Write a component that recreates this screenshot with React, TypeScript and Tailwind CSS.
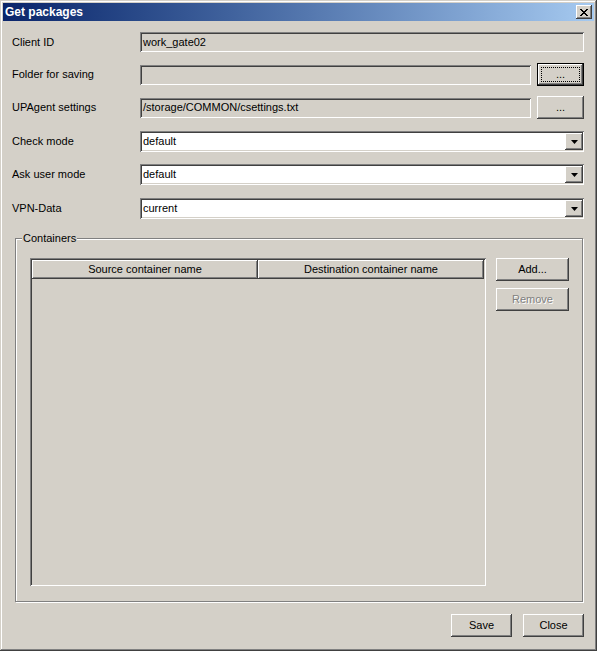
const FONT = "font-['Liberation_Sans',Arial,sans-serif]"

const raised =
  'bg-[#d4d0c8] shadow-[inset_-1px_-1px_0_#404040,inset_1px_1px_0_#fff,inset_-2px_-2px_0_#808080]'
const sunken =
  'shadow-[inset_1px_1px_0_#808080,inset_-1px_-1px_0_#fff,inset_2px_2px_0_#404040,inset_-2px_-2px_0_#d4d0c8]'

function Field({ value, white, className = '' }: { value?: string; white?: boolean; className?: string }) {
  return (
    <div
      className={`h-[20px] flex items-center pl-[3px] text-[11px] text-black ${white ? 'bg-white' : 'bg-[#d4d0c8]'} ${sunken} ${className}`}
    >
      {value}
    </div>
  )
}

function Combo({ value }: { value: string }) {
  return (
    <div className={`relative flex-1 h-[21px] bg-white flex items-center pl-[3px] text-[11px] text-black ${sunken}`}>
      <span className="flex-1">{value}</span>
      <div className={`w-[18px] h-[17px] mr-[1px] flex items-center justify-center ${raised}`}>
        <svg width="7" height="4" viewBox="0 0 7 4">
          <path d="M0 0h7L3.5 4z" fill="#000" />
        </svg>
      </div>
    </div>
  )
}

function Button({
  children,
  className = '',
  focused,
  disabled,
}: {
  children: React.ReactNode
  className?: string
  focused?: boolean
  disabled?: boolean
}) {
  if (focused) {
    return (
      <div className={`border border-black ${className}`}>
        <div className={`w-full h-full p-[3px] ${raised}`}>
          <div className="w-full h-full border border-dotted border-black flex items-center justify-center text-[11px] text-black">
            {children}
          </div>
        </div>
      </div>
    )
  }
  return (
    <div
      className={`flex items-center justify-center text-[11px] ${raised} ${
        disabled ? 'text-[#808080] [text-shadow:1px_1px_0_#fff]' : 'text-black'
      } ${className}`}
    >
      {children}
    </div>
  )
}

function Row({ label, children, className = '' }: { label: string; children: React.ReactNode; className?: string }) {
  return (
    <div className={`flex items-center ${className}`}>
      <div className="w-[128px] text-[11px] text-black">{label}</div>
      {children}
    </div>
  )
}

export default function App() {
  return (
    <div
      className={`${FONT} w-[597px] h-[651px] p-[3px] flex flex-col bg-[#d4d0c8] shadow-[inset_-1px_-1px_0_#404040,inset_1px_1px_0_#d4d0c8,inset_-2px_-2px_0_#808080,inset_2px_2px_0_#fff]`}
    >
      {/* Title bar */}
      <div className="h-[18px] flex items-center pl-[2px] pr-[2px] bg-gradient-to-r from-[#0a246a] to-[#a6caf0]">
        <span className="flex-1 text-white font-bold text-[12px] leading-none">Get packages</span>
        <div className={`w-[16px] h-[14px] flex items-center justify-center ${raised}`}>
          <svg width="8" height="7" viewBox="0 0 8 7" shapeRendering="crispEdges">
            <path
              d="M0 0h2v1h1v1h2V1h1V0h2v1H7v1H6v1H5v1h1v1h1v1h1v1H6V6H5V5H3v1H2v1H0V6h1V5h1V4h1V3H2V2H1V1H0z"
              fill="#000"
            />
          </svg>
        </div>
      </div>

      {/* Form */}
      <div className="flex flex-col pl-[9px] pr-[10px]">
        <Row label="Client ID" className="mt-[11px] h-[20px]">
          <Field value="work_gate02" className="flex-1" />
        </Row>
        <Row label="Folder for saving" className="mt-[11px] h-[23px]">
          <Field className="flex-1" />
          <Button focused className="ml-[6px] w-[47px] h-[23px]">
            ...
          </Button>
        </Row>
        <Row label="UPAgent settings" className="mt-[10px] h-[23px]">
          <Field value="/storage/COMMON/csettings.txt" className="flex-1" />
          <Button className="ml-[6px] w-[47px] h-[23px]">...</Button>
        </Row>
        <Row label="Check mode" className="mt-[12px] h-[21px]">
          <Combo value="default" />
        </Row>
        <Row label="Ask user mode" className="mt-[12px] h-[21px]">
          <Combo value="default" />
        </Row>
        <Row label="VPN-Data" className="mt-[13px] h-[21px]">
          <Combo value="current" />
        </Row>
      </div>

      {/* Containers group */}
      <div className="relative mt-[19px] ml-[12px] w-[568px] h-[364px] border border-[#808080] shadow-[1px_1px_0_#fff,inset_1px_1px_0_#fff] flex pt-[19px] pl-[14px]">
        <span className="absolute left-[6px] top-[-8px] px-[1px] bg-[#d4d0c8] text-[11px] text-black leading-[14px]">
          Containers
        </span>
        <div className={`w-[456px] h-[328px] p-[2px] bg-[#d4d0c8] ${sunken}`}>
          <div className="flex h-[19px]">
            <div className={`w-[226px] flex items-center justify-center text-[11px] text-black ${raised}`}>
              Source container name
            </div>
            <div className={`w-[226px] flex items-center justify-center text-[11px] text-black ${raised}`}>
              Destination container name
            </div>
          </div>
        </div>
        <div className="ml-[10px] flex flex-col gap-[7px]">
          <Button className="w-[73px] h-[23px]">Add...</Button>
          <Button disabled className="w-[73px] h-[23px]">
            Remove
          </Button>
        </div>
      </div>

      {/* Footer */}
      <div className="mt-[12px] flex justify-end gap-[11px] pr-[10px]">
        <Button className="w-[61px] h-[23px]">Save</Button>
        <Button className="w-[61px] h-[23px]">Close</Button>
      </div>
    </div>
  )
}
